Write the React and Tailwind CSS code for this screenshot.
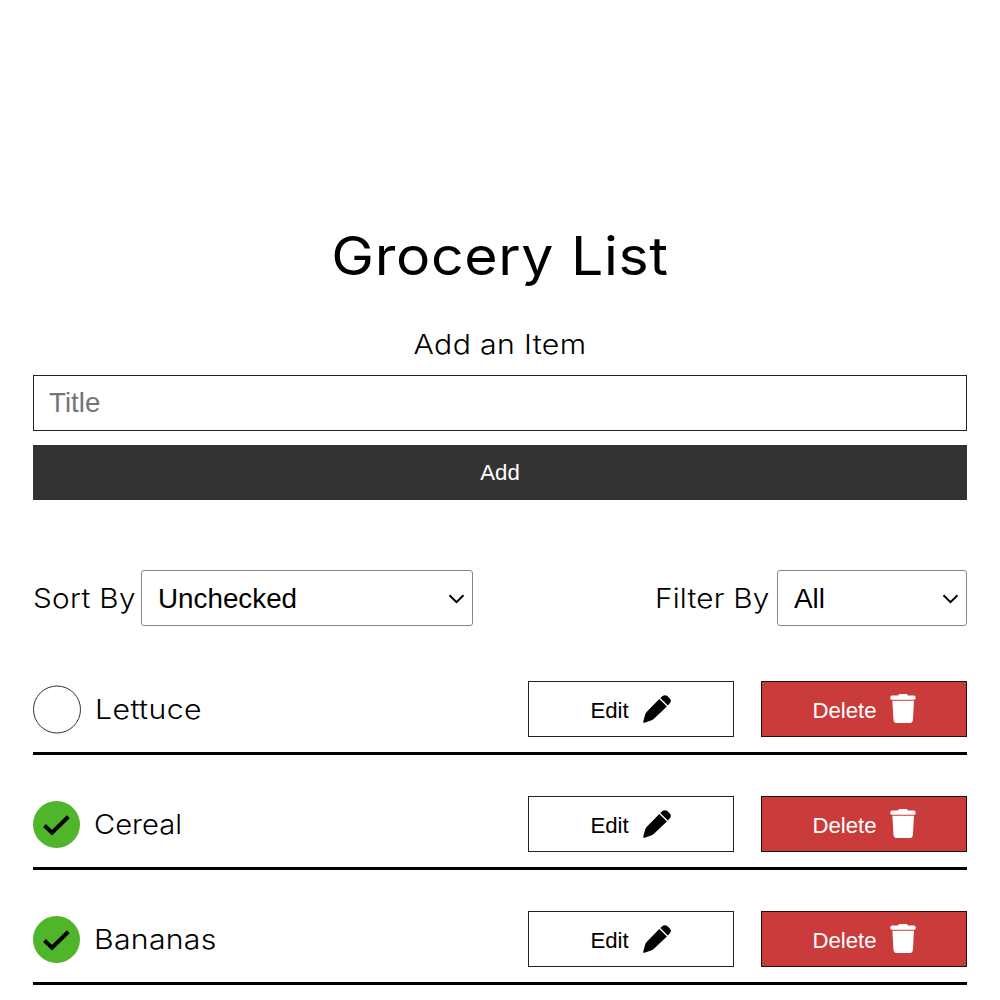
const rows = [
  { title: "Lettuce", done: false, spacing: "tracking-[0.35px] scale-x-[1.1]", place: "h-[74px]" },
  { title: "Cereal", done: true, spacing: "tracking-[0px] scale-x-[1.06]", place: "mt-[41px] h-[74px]" },
  { title: "Bananas", done: true, spacing: "tracking-[0.25px] scale-x-[1.1]", place: "mt-[41px] h-[74px]" },
];

function Chevron() {
  return (
    <svg className="ml-auto h-[10px] w-4 translate-x-[0.5px]" viewBox="0 0 16 10" fill="none" stroke="#000" strokeWidth="2">
      <path d="M1 1.3 L8 8.2 L15 1.3" />
    </svg>
  );
}

function Pencil() {
  return (
    <svg className="ml-[13px] h-7 w-7 -translate-y-[2px]" viewBox="0 0 28 28" fill="#000">
      <path d="M16.3 4 L23.9 11.4 L11.2 23.4 Q9.8 24.7 8 25.4 L1.5 27.8 Q0 28.2 .3 26.6 L2.1 19.8 Q2.5 18.1 3.8 16.7Z" />
      <path d="M17.3 3.1 L19.6 1 Q21.8 -.6 24.3 .9 L27 3.7 Q28.7 5.8 27 8 L24.8 10.5Z" />
    </svg>
  );
}

function Trash() {
  return (
    <svg className="ml-[14px] h-[29px] w-[26px] -translate-y-[2px]" viewBox="0 0 26 29" fill="#fff">
      <path d="M1.9 1.4 H8 Q8.5 0 10 0 H16 Q17.5 0 18 1.4 H24 Q25.6 1.4 25.6 3 V4.2 Q25.6 5.8 24 5.8 H2 Q.4 5.8 .4 4.2 V3 Q.4 1.4 1.9 1.4Z" />
      <path d="M2.4 6.8 H24 L22.9 26 Q22.6 29 19.8 29 H6.5 Q3.8 29 3.5 26Z" />
    </svg>
  );
}

function Select({ value, className }) {
  return (
    <button
      className={`flex h-14 items-center rounded-[3px] border border-[#858585] bg-white pl-4 pr-2 pt-px font-['Liberation_Sans',sans-serif] text-[27.8px] ${className}`}
    >
      <span>{value}</span>
      <Chevron />
    </button>
  );
}

function Row({ title, done, spacing, place }) {
  return (
    <li className={`flex items-start border-b-[3px] border-black ${place}`}>
      <div className="flex h-14 flex-1 items-center">
        {done ? (
          <span className="flex h-[47px] w-[47px] items-center justify-center rounded-full bg-[#4fb52a]">
            <svg className="h-[21px] w-[27px] translate-y-px" viewBox="0 0 27 21" fill="none" stroke="#000" strokeWidth="4">
              <path d="M1.5 10.5 L9 17.7 L25.3 1.8" />
            </svg>
          </span>
        ) : (
          <span className="h-12 w-12 translate-y-[0.5px] rounded-full border border-[#333]" />
        )}
        <span className={`ml-[14px] origin-left pt-[2px] text-[27.5px] font-light leading-none ${spacing}`}>{title}</span>
      </div>
      <button className="flex h-14 w-[206px] items-center justify-center border border-[#222] bg-white pt-[3px] font-['Liberation_Sans',sans-serif] text-[22.2px]">
        <span className="-translate-x-px">Edit</span>
        <Pencil />
      </button>
      <button className="ml-[27px] flex h-14 w-[206px] items-center justify-center border border-[#1c1010] bg-[#ca3b3b] pt-[3px] font-['Liberation_Sans',sans-serif] text-[22.2px] text-white">
        <span className="translate-x-[0.5px]">Delete</span>
        <Trash />
      </button>
    </li>
  );
}

export default function App() {
  return (
    <main className="h-[1000px] w-[1000px] overflow-hidden bg-white pl-[33px] pr-[33px] pt-[226px] font-['Inter',sans-serif] text-black">
      <h1 className="h-[60px] scale-x-[1.08] whitespace-nowrap text-center text-[53px] font-normal leading-[60px] tracking-[0.6px]">
        Grocery List
      </h1>
      <div className="mt-[42px] h-8 scale-x-[1.1] text-center text-[27.5px] font-light leading-8 tracking-[0.3px]">
        Add an Item
      </div>
      <input
        placeholder="Title"
        className="mt-[15px] block h-14 w-full border border-[#222] pl-[15px] pr-4 font-['Liberation_Sans',sans-serif] text-[27.7px] placeholder:text-[#757575]"
      />
      <button className="mt-[14px] block h-[55px] w-full bg-[#333] font-['Liberation_Sans',sans-serif] text-[22.2px] text-white">
        Add
      </button>
      <div className="mt-[70px] flex items-center justify-between">
        <div className="flex items-center">
          <span className="w-[108px] origin-left scale-x-[1.08] whitespace-nowrap pt-[2px] text-[27.5px] font-light tracking-[0.3px]">Sort By</span>
          <Select value="Unchecked" className="w-[332px]" />
        </div>
        <div className="flex items-center">
          <span className="w-[122px] origin-left scale-x-[1.08] whitespace-nowrap pt-[2px] text-[27.5px] font-light tracking-[0.2px]">Filter By</span>
          <Select value="All" className="w-[190px]" />
        </div>
      </div>
      <ul className="mt-[55px]">
        {rows.map((r) => (
          <Row key={r.title} {...r} />
        ))}
      </ul>
    </main>
  );
}
